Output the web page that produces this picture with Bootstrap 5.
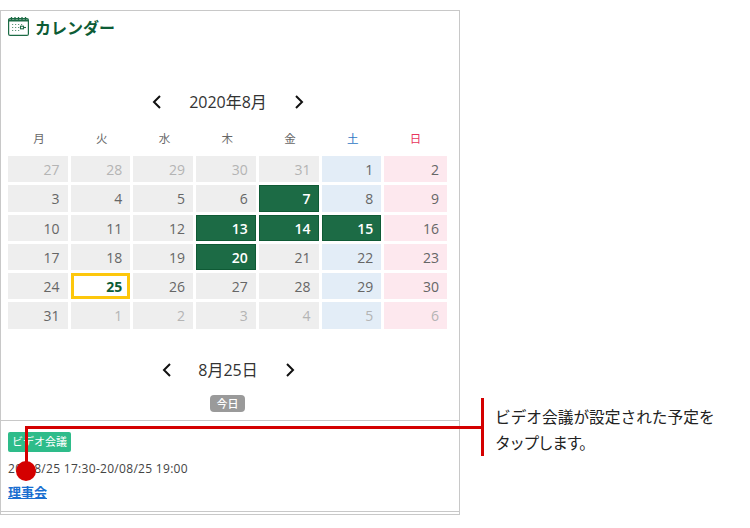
<!DOCTYPE html>
<html lang="ja"><head><meta charset="utf-8">
<link rel="stylesheet" href="https://cdn.jsdelivr.net/npm/bootstrap@5.3.0/dist/css/bootstrap.min.css">
<style>
html,body{height:100%;margin:0;background:#fff;overflow:hidden}
body{position:relative;font-family:"Open Sans","Noto Sans CJK JP",sans-serif;color:#333;font-size:14px}
.scr{width:460px;height:505px;margin-top:10px;border:1px solid #c8c8c8;border-bottom:0;position:relative;box-sizing:border-box}
.ttl{height:31px;padding:0 0 0 7px;color:#0d5c36;font-size:16px;font-weight:700;gap:6px;line-height:20px}
.ttl span{margin-top:2px}
.mon{height:40px;margin-top:40px;padding-right:4px;font-size:16px;color:#333;line-height:20px}
.mon span.lbl{width:132px;text-align:center}
.mon2 span.lbl{width:113px}
.wk{display:grid;grid-template-columns:repeat(7,1fr);padding:0 12px 0 6.6px;height:34px;font-size:11.5px;color:#666;text-align:center;line-height:34px}
.grd{display:grid;grid-template-columns:repeat(6,1fr) 1.05fr;column-gap:3.2px;row-gap:3px;padding:0 12px 0 7px}
.dc{height:26.3px;background:#eee;text-align:right;padding-right:8px;line-height:27px;font-size:14px;color:#666}
.dc.off{color:#b4b4b4}
.dc.sat{background:#e3edf7}.dc.sun{background:#fde8ee}
.dc.on{background:#1c6b45;color:#fff;border:1px solid #0f5a35;line-height:25px;padding-right:7px;font-weight:600}
.dc.now{background:#fff;border:3px solid #fdc70c;color:#0d5c36;font-weight:700;line-height:21px;padding-right:5px}
.wsat{color:#2f78c4}.wsun{color:#e8365d}
.mon2{margin-top:21px}
.tdy{display:block;width:35px;height:17px;margin:5px 0 0 209px;background:#9a9a9a;color:#fff;font-size:11px;border-radius:4px;text-align:center;line-height:17px;font-weight:500}
.evt{border-top:1px solid #c8c8c8;border-bottom:1px solid #c8c8c8;margin-top:8px;height:92px;padding:11px 7px 0}
.tg{display:block;width:fit-content;height:20px;background:#2ebc8a;color:#fff;font-size:11px;line-height:20px;padding:0 4px;border-radius:2px}
.tm{font-size:12px;color:#444;margin-top:8px;line-height:18px;letter-spacing:.3px}
.lk{display:inline-block;margin-top:5px;font-size:13px;font-weight:700;color:#1a6fd0;line-height:18px}
.foot{height:4px;border-bottom:1px solid #c8c8c8;width:460px;position:absolute;top:511px;left:0}
.h-ln{position:absolute;background:#d40000}
.dot{position:absolute;left:16px;top:461px;width:20px;height:20px;border-radius:50%;background:#d40000}
.cap{position:absolute;left:495px;top:404px;width:240px;font-size:15.7px;line-height:26px;color:#222}
.cap2{letter-spacing:-1.4px}
</style></head><body>
<div class="scr">
  <div class="ttl d-flex align-items-center">
    <svg width="21" height="19" viewBox="0 0 21 19" fill="none" stroke="#1c6b45"><rect x=".6" y="1.600" width="19.800" height="16.800" rx="1.500" stroke-width="1.200"/><path d="M1 3.500h19" stroke-width="2"/><path d="M3.500 0v3M7 0v3M10.500 0v3M14 0v3M17.500 0v3" stroke-width="1.300"/><path d="M4 7.500h1.200M7 7.500h1.200M10 7.500h1.200M13 7.500h1.200M4 10.500h1.200M7 10.500h1.200M10 10.500h1.200M4 13.500h1.200M7 13.500h1.200M10 13.500h1.200" stroke-width="1.200" stroke-opacity=".7"/><rect x="12.500" y="9.200" width="3" height="2.600" stroke-width="1.100"/><path d="M15.500 10.500h2.500" stroke-width="1.100"/></svg>
    <span>カレンダー</span>
  </div>
  <div class="mon d-flex align-items-center justify-content-center">
    <svg width="10" height="14" viewBox="0 0 10 14" fill="none" stroke="#111" stroke-width="2"><path d="M8 1 2 7l6 6"/></svg>
    <span class="lbl">2020年8月</span>
    <svg width="10" height="14" viewBox="0 0 10 14" fill="none" stroke="#111" stroke-width="2"><path d="M2 1l6 6-6 6"/></svg>
  </div>
  <div class="wk"><span>月</span><span>火</span><span>水</span><span>木</span><span>金</span><span class="wsat">土</span><span class="wsun">日</span></div>
  <div class="grd">
    <div class="dc off">27</div><div class="dc off">28</div><div class="dc off">29</div><div class="dc off">30</div><div class="dc off">31</div><div class="dc sat">1</div><div class="dc sun">2</div>
    <div class="dc">3</div><div class="dc">4</div><div class="dc">5</div><div class="dc">6</div><div class="dc on">7</div><div class="dc sat">8</div><div class="dc sun">9</div>
    <div class="dc">10</div><div class="dc">11</div><div class="dc">12</div><div class="dc on">13</div><div class="dc on">14</div><div class="dc on">15</div><div class="dc sun">16</div>
    <div class="dc">17</div><div class="dc">18</div><div class="dc">19</div><div class="dc on">20</div><div class="dc">21</div><div class="dc sat">22</div><div class="dc sun">23</div>
    <div class="dc">24</div><div class="dc now">25</div><div class="dc">26</div><div class="dc">27</div><div class="dc">28</div><div class="dc sat">29</div><div class="dc sun">30</div>
    <div class="dc">31</div><div class="dc off">1</div><div class="dc off">2</div><div class="dc off">3</div><div class="dc off">4</div><div class="dc sat off">5</div><div class="dc sun off">6</div>
  </div>
  <div class="mon mon2 d-flex align-items-center justify-content-center">
    <svg width="10" height="14" viewBox="0 0 10 14" fill="none" stroke="#111" stroke-width="2"><path d="M8 1 2 7l6 6"/></svg>
    <span class="lbl">8月25日</span>
    <svg width="10" height="14" viewBox="0 0 10 14" fill="none" stroke="#111" stroke-width="2"><path d="M2 1l6 6-6 6"/></svg>
  </div>
  <span class="tdy">今日</span>
  <div class="evt">
    <span class="tg">ビデオ会議</span>
    <div class="tm">20/08/25 17:30-20/08/25 19:00</div>
    <a class="lk" href="#">理事会</a>
  </div>
</div>
<div class="foot"></div>
<div class="h-ln" style="left:25px;top:426px;width:458px;height:3px"></div>
<div class="h-ln" style="left:25px;top:426px;width:3px;height:40px"></div>
<div class="h-ln" style="left:481px;top:398px;width:3px;height:58px"></div>
<div class="dot"></div>
<div class="cap">ビデオ会議が設定された予定を<br><span class="cap2">タップします。</span></div>
</body></html>
